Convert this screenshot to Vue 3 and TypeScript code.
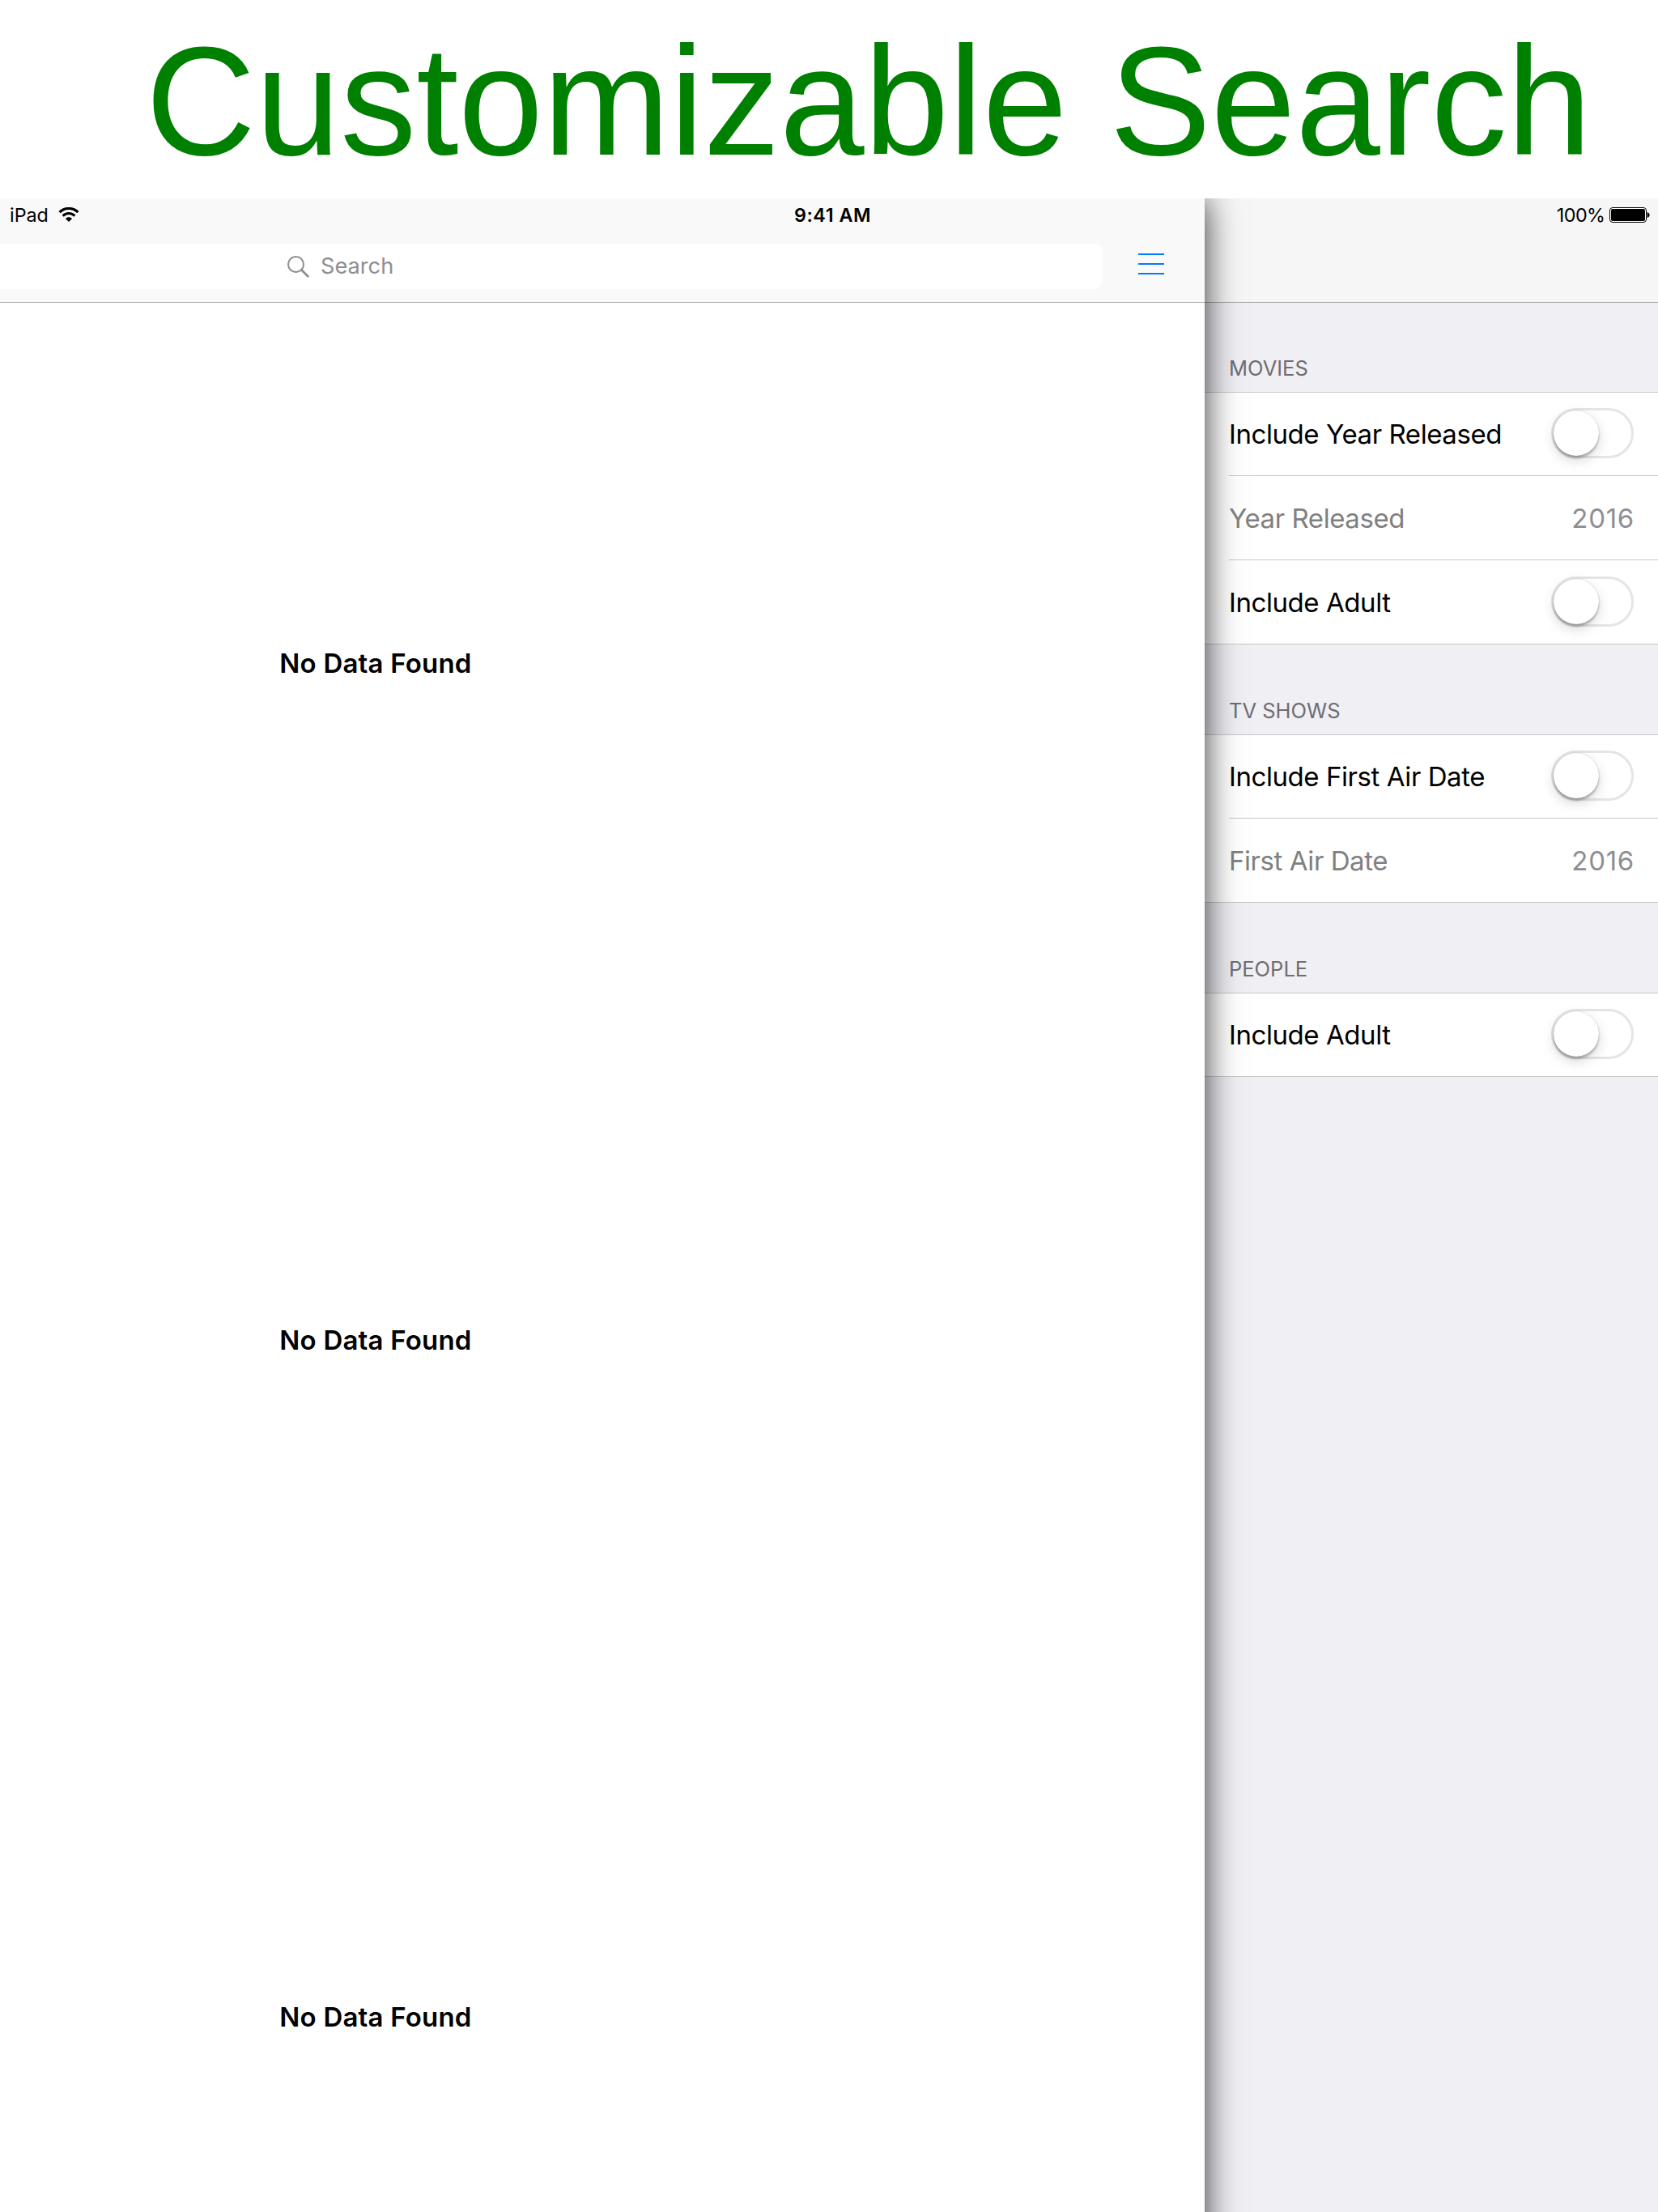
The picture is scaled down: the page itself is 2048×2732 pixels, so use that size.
<script setup lang="ts">
interface Row { label: string; value?: string }
interface Group { title: string; rows: Row[] }

const groups: Group[] = [
  { title: 'MOVIES', rows: [{ label: 'Include Year Released' }, { label: 'Year Released', value: '2016' }, { label: 'Include Adult' }] },
  { title: 'TV SHOWS', rows: [{ label: 'Include First Air Date' }, { label: 'First Air Date', value: '2016' }] },
  { title: 'PEOPLE', rows: [{ label: 'Include Adult' }] },
]
const sections = ['movies', 'shows', 'people']
</script>

<template>
  <div class="page">
    <h1 class="title">Customizable Search</h1>
    <div class="screen">
      <div class="status">
        <span class="carrier">iPad</span>
        <svg class="wifi" width="26" height="19" viewBox="0 0 26 19">
          <path d="M1.600 6.200C8.100-.1 17.900-.1 24.400 6.200" fill="none" stroke="#000" stroke-width="3.200" />
          <path d="M5.600 10.600C9.800 6.500 16.200 6.500 20.400 10.600" fill="none" stroke="#000" stroke-width="3" />
          <path d="M8.900 13.900C11.300 11.600 14.700 11.600 17.100 13.900L13 18z" />
        </svg>
        <span class="time">9:41 AM</span>
        <span class="percent">100%</span>
        <svg class="battery" width="50" height="19" viewBox="0 0 50 19">
          <rect x=".5" y=".5" width="45" height="18" rx="3.500" fill="#fff" stroke="#000" />
          <rect x="2" y="2" width="42" height="15" rx="2" />
          <path d="M46.600 6c1.800.4 3 1.700 3 3.500S48.400 12.600 46.600 13z" />
        </svg>
      </div>
      <main class="main">
        <header class="bar">
          <div class="field">
            <svg class="glass" width="27" height="27" viewBox="0 0 27 27" fill="none" stroke="#8e8e93">
              <circle cx="10.500" cy="10.500" r="9.500" stroke-width="2" />
              <path d="M17.300 17.300L25.300 25.300" stroke-width="2.800" stroke-linecap="round" />
            </svg>
            <span class="placeholder">Search</span>
          </div>
          <div class="menu"><i></i><i></i><i></i></div>
        </header>
        <section v-for="s in sections" :key="s" class="empty">No Data Found</section>
      </main>
      <aside class="side">
        <div class="sidebar-nav"></div>
        <section v-for="g in groups" :key="g.title" class="group">
          <h2 class="heading">{{ g.title }}</h2>
          <div class="rows">
            <div v-for="r in g.rows" :key="r.label" class="row" :class="{ off: r.value }">
              <span class="label">{{ r.label }}</span>
              <span v-if="r.value" class="value">{{ r.value }}</span>
              <span v-else class="switch"><b></b></span>
            </div>
          </div>
        </section>
      </aside>
    </div>
  </div>
</template>

<style>
body { margin: 0; background: #fff; }
</style>

<style scoped>
.page { width: 2048px; height: 2732px; display: flex; flex-direction: column; overflow: hidden; background: #fff; font-family: Inter, "Liberation Sans", sans-serif; color: #000; }
.title { margin: 0; height: 245px; flex: none; padding: 4px 0 0 180px; box-sizing: border-box; font: 400 188px/245px "Liberation Sans", Arial, sans-serif; letter-spacing: -.05px; color: #008000; white-space: nowrap; transform: scaleY(1.018); transform-origin: 0 190px; }
.screen { position: relative; flex: 1; min-height: 0; display: flex; overflow: hidden; }
.status { position: absolute; z-index: 3; inset: 0 0 auto 0; height: 40px; display: flex; align-items: center; padding: 0 10px 0 12px; box-sizing: border-box; font-size: 23.3px; }
.wifi { margin: 1px 0 0 12px; }
.time { position: absolute; left: 50%; transform: translateX(-50%); margin-left: 4.500px; font-weight: 600; letter-spacing: .55px; }
.percent { margin-left: auto; letter-spacing: -.5px; }
.battery { margin: 1px 0 0 5.500px; }
.main { position: relative; z-index: 2; width: 1488px; margin-bottom: -60px; flex: none; background: #fff; box-shadow: 0 0 40px rgba(0, 0, 0, .8); }
.bar { height: 129px; box-sizing: border-box; border-bottom: 1px solid #b2b2b2; background: #f9f9f9; display: flex; align-items: flex-start; padding-top: 56px; }
.field { width: 1362px; height: 56px; box-sizing: border-box; padding-left: 354.5px; display: flex; align-items: center; gap: 14.5px; border-radius: 0 10px 10px 0; background: #fff; color: #8e8e93; font-size: 27.2px; }
.placeholder { margin-top: -2px; }
.menu { margin: 12px 0 0 44px; width: 32px; display: flex; flex-direction: column; gap: 10px; }
.menu i { height: 2px; background: #007aff; }
.empty { height: 836px; width: 928px; display: flex; justify-content: center; padding-top: 425px; box-sizing: border-box; font-size: 33px; letter-spacing: .2px; line-height: 40px; font-weight: 600; }
.side { flex: 1; background: #efeff4; }
.sidebar-nav { height: 129px; box-sizing: border-box; border-bottom: 1px solid #a9a9ac; background: #f6f6f7; }
.heading { margin: 0; height: 110px; display: flex; align-items: flex-end; padding: 0 0 13px 30px; box-sizing: border-box; font-size: 25.5px; font-weight: 400; line-height: 32px; color: #6d6d72; }
.group + .group .heading { height: 111px; }
.rows { background: #fff; border: solid #c8c7cc; border-width: 1px 0; }
.row { height: 104px; box-sizing: border-box; margin-left: 30px; padding-right: 30px; display: flex; align-items: center; justify-content: space-between; font-size: 33px; letter-spacing: -.43px; border-top: 1px solid #c8c7cc; }
.row:first-child { height: 102px; padding-bottom: 1px; border-top: 0; }
.off { color: #808080; }
.value { color: #8e8e93; letter-spacing: .7px; margin-right: -1px; }
.switch { width: 102px; height: 62px; margin-top: -1px; box-sizing: border-box; border: 3px solid #e5e5e5; border-radius: 31px; background: #fff; }
.switch b { display: block; width: 56px; height: 56px; border-radius: 50%; background: #fff; box-shadow: 0 3px 3px rgba(0,0,0,.25), 0 0 1px rgba(0,0,0,.3), 0 6px 16px rgba(0,0,0,.15); }
</style>
